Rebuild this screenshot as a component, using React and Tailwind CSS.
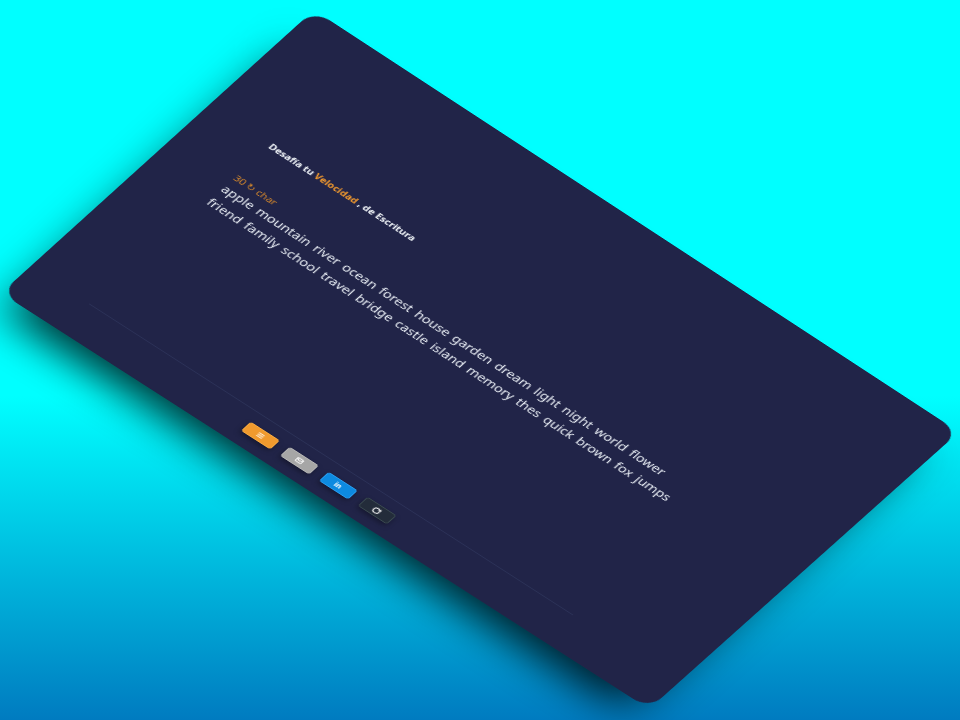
import React from "react";
import { Mail, RotateCw, AlignJustify } from "lucide-react";

const W = 800, H = 500;
function homography(p) {
  const [[x0, y0], [x1, y1], [x2, y2], [x3, y3]] = p;
  const dx1 = x1 - x2, dx2 = x3 - x2, sx = x0 - x1 + x2 - x3;
  const dy1 = y1 - y2, dy2 = y3 - y2, sy = y0 - y1 + y2 - y3;
  const den = dx1 * dy2 - dx2 * dy1;
  const g = (sx * dy2 - dx2 * sy) / den;
  const h = (dx1 * sy - sx * dy1) / den;
  const a = x1 - x0 + g * x1, b = x3 - x0 + h * x3;
  const d = y1 - y0 + g * y1, e = y3 - y0 + h * y3;
  return `matrix3d(${[a / W, d / W, 0, g / W, b / H, e / H, 0, h / H, 0, 0, 1, 0, x0, y0, 0, 1].join(",")})`;
}
const cardTransform = homography([[314, 10], [959, 432], [649, 709], [1, 293]]);

function Btn({ className, children }) {
  return (
    <div className={`w-9 h-4 rounded-[3px] border flex items-center justify-center text-white text-[8px] font-bold leading-none shadow-[0_3px_6px_rgba(0,0,0,0.35)] ${className}`}>
      {children}
    </div>
  );
}

export default function App() {
  return (
    <div className="h-screen w-full overflow-hidden bg-[linear-gradient(to_bottom,#00ffff_55%,#007bc0_100%)] font-['Noto_Sans',sans-serif]">
      <div
        style={{ transform: cardTransform }}
        className="w-[800px] h-[500px] origin-top-left rounded-[20px] bg-[#212448] shadow-[0_38px_50px_-18px_rgba(0,0,0,0.8)] flex flex-col pl-[75px] pt-[160px]"
      >
        <h1 className="text-[10.5px] leading-[16px] font-bold text-[#f1f5f9]">
          Desafía tu <span className="text-[#f0982e]">Velocidad</span> , de Escritura
        </h1>
        <div className="mt-[40px] text-[11px] leading-[16px] text-[#d98a2b]">30 ↻ char</div>
        <div className="w-[600px] -mt-[1px] text-[14px] leading-[23px] text-[#e8edf4] [word-spacing:2px]">
          <div>apple mountain river ocean forest house garden dream light night world flower</div>
          <div>friend family school travel bridge castle island memory thes quick brown fox jumps</div>
        </div>
        <div className="mt-auto mb-[17px] -ml-1 w-[597px] border-t border-[#2b3157] pt-[14px] flex justify-center gap-3">
          <Btn className="bg-[#f09a2e] border-[#f5a83f]"><AlignJustify size={8} strokeWidth={3} /></Btn>
          <Btn className="bg-[#a6a6a6] border-[#b5b5b5]"><Mail size={8} strokeWidth={3} /></Btn>
          <Btn className="bg-[#0d8ae0] border-[#2a9df0]">in</Btn>
          <Btn className="bg-[#232c3a] border-[#3a4a50]"><RotateCw size={9} strokeWidth={3} /></Btn>
        </div>
      </div>
    </div>
  );
}
